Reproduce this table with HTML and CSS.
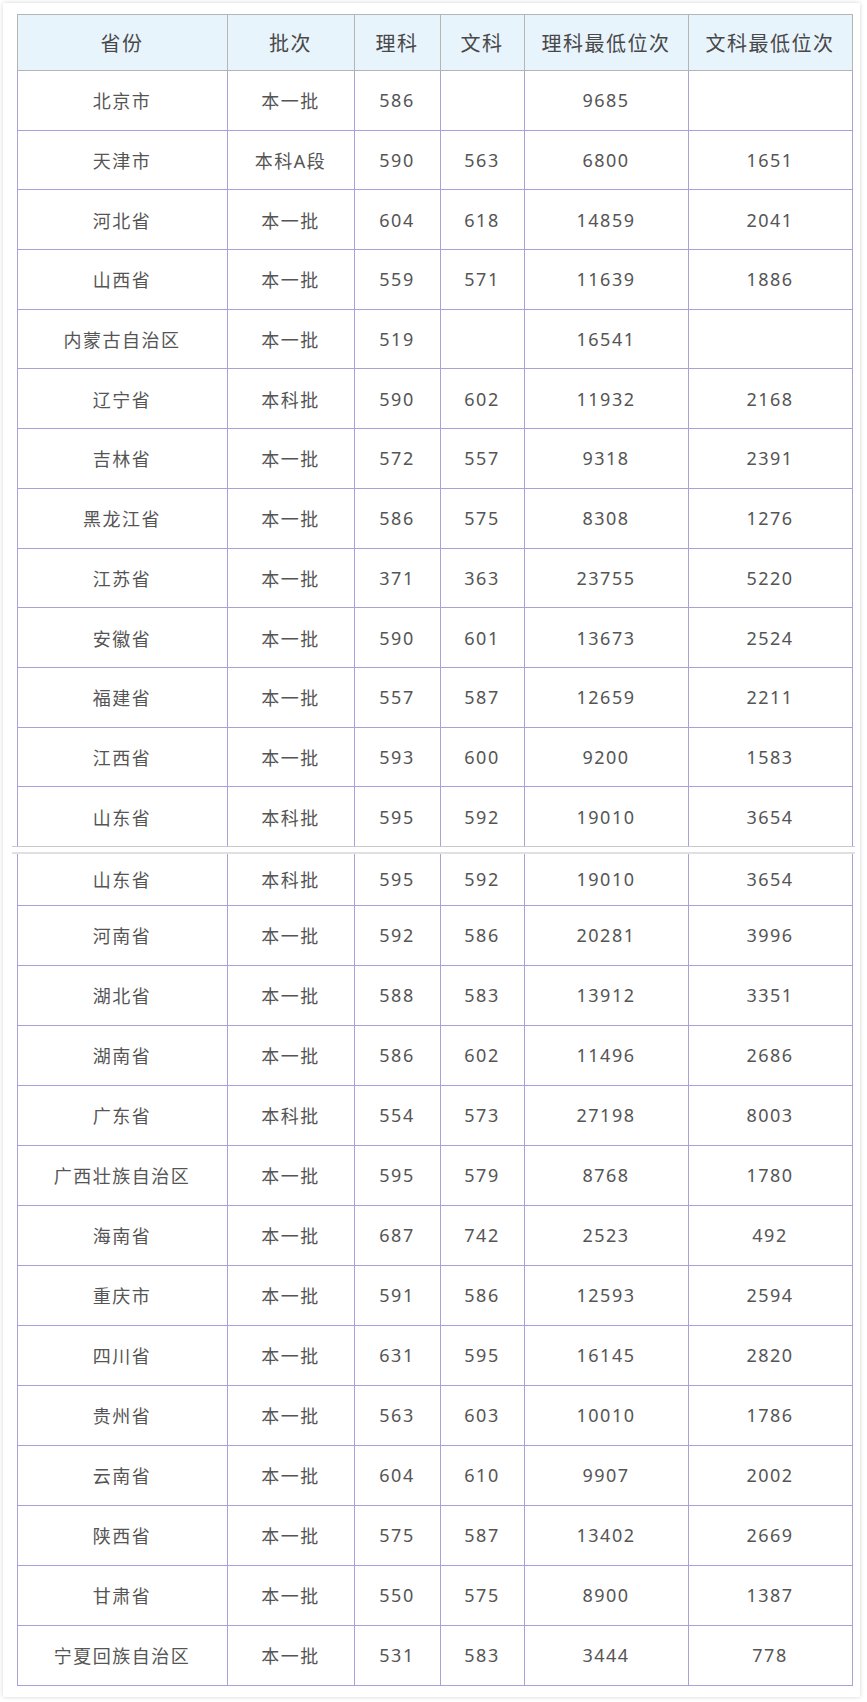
FILE: index.html
```html
<!DOCTYPE html>
<html lang="zh">
<head>
<meta charset="utf-8">
<title>分数线</title>
<link rel="stylesheet" href="styles.css">
</head>
<body>
<div class="card">
<table class="tbl top">
<colgroup><col class="c1"><col class="c2"><col class="c3"><col class="c4"><col class="c5"><col class="c6"></colgroup>
<thead>
<tr><th>省份</th><th>批次</th><th>理科</th><th>文科</th><th>理科最低位次</th><th>文科最低位次</th></tr>
</thead>
<tbody>
<tr><td>北京市</td><td>本一批</td><td>586</td><td></td><td>9685</td><td></td></tr>
<tr><td>天津市</td><td>本科A段</td><td>590</td><td>563</td><td>6800</td><td>1651</td></tr>
<tr><td>河北省</td><td>本一批</td><td>604</td><td>618</td><td>14859</td><td>2041</td></tr>
<tr><td>山西省</td><td>本一批</td><td>559</td><td>571</td><td>11639</td><td>1886</td></tr>
<tr><td>内蒙古自治区</td><td>本一批</td><td>519</td><td></td><td>16541</td><td></td></tr>
<tr><td>辽宁省</td><td>本科批</td><td>590</td><td>602</td><td>11932</td><td>2168</td></tr>
<tr><td>吉林省</td><td>本一批</td><td>572</td><td>557</td><td>9318</td><td>2391</td></tr>
<tr><td>黑龙江省</td><td>本一批</td><td>586</td><td>575</td><td>8308</td><td>1276</td></tr>
<tr><td>江苏省</td><td>本一批</td><td>371</td><td>363</td><td>23755</td><td>5220</td></tr>
<tr><td>安徽省</td><td>本一批</td><td>590</td><td>601</td><td>13673</td><td>2524</td></tr>
<tr><td>福建省</td><td>本一批</td><td>557</td><td>587</td><td>12659</td><td>2211</td></tr>
<tr><td>江西省</td><td>本一批</td><td>593</td><td>600</td><td>9200</td><td>1583</td></tr>
<tr class="last"><td>山东省</td><td>本科批</td><td>595</td><td>592</td><td>19010</td><td>3654</td></tr>
</tbody>
</table>
<div class="seam"></div>
<table class="tbl bottom">
<colgroup><col class="c1"><col class="c2"><col class="c3"><col class="c4"><col class="c5"><col class="c6"></colgroup>
<tbody>
<tr class="first"><td>山东省</td><td>本科批</td><td>595</td><td>592</td><td>19010</td><td>3654</td></tr>
<tr><td>河南省</td><td>本一批</td><td>592</td><td>586</td><td>20281</td><td>3996</td></tr>
<tr><td>湖北省</td><td>本一批</td><td>588</td><td>583</td><td>13912</td><td>3351</td></tr>
<tr><td>湖南省</td><td>本一批</td><td>586</td><td>602</td><td>11496</td><td>2686</td></tr>
<tr><td>广东省</td><td>本科批</td><td>554</td><td>573</td><td>27198</td><td>8003</td></tr>
<tr><td>广西壮族自治区</td><td>本一批</td><td>595</td><td>579</td><td>8768</td><td>1780</td></tr>
<tr><td>海南省</td><td>本一批</td><td>687</td><td>742</td><td>2523</td><td>492</td></tr>
<tr><td>重庆市</td><td>本一批</td><td>591</td><td>586</td><td>12593</td><td>2594</td></tr>
<tr><td>四川省</td><td>本一批</td><td>631</td><td>595</td><td>16145</td><td>2820</td></tr>
<tr><td>贵州省</td><td>本一批</td><td>563</td><td>603</td><td>10010</td><td>1786</td></tr>
<tr><td>云南省</td><td>本一批</td><td>604</td><td>610</td><td>9907</td><td>2002</td></tr>
<tr><td>陕西省</td><td>本一批</td><td>575</td><td>587</td><td>13402</td><td>2669</td></tr>
<tr><td>甘肃省</td><td>本一批</td><td>550</td><td>575</td><td>8900</td><td>1387</td></tr>
<tr><td>宁夏回族自治区</td><td>本一批</td><td>531</td><td>583</td><td>3444</td><td>778</td></tr>
</tbody>
</table>
</div>
</body>
</html>
```

FILE: styles.css
```css
html, body {
  margin: 0;
  padding: 0;
  background: #ffffff;
}
body {
  font-family: "Noto Sans", "Noto Sans CJK SC", sans-serif;
  color: #555555;
}
.card {
  margin: 3px;
  width: 857px;
  box-sizing: border-box;
  padding: 11px 0 11px 13.5px;
  background: #ffffff;
  box-shadow: 0 0 4px rgba(0, 0, 0, 0.18);
}
.tbl {
  border-collapse: collapse;
  table-layout: fixed;
  width: 835px;
}
.c1 { width: 210px; }
.c2 { width: 127px; }
.c3 { width: 86px; }
.c4 { width: 84px; }
.c5 { width: 164px; }
.c6 { width: 164px; }
.tbl th {
  height: 55px;
  padding: 0;
  background: #e8f4fc;
  border: 1px solid #b5b5b5;
  font-weight: normal;
  font-size: 20px;
  letter-spacing: 1.5px;
  color: #484848;
  text-align: center;
  vertical-align: middle;
}
.tbl td {
  height: 58.7px;
  padding: 0;
  border: 1px solid #aaa1d6;
  font-size: 18px;
  letter-spacing: 1.5px;
  text-align: center;
  vertical-align: middle;
}
.top tr.last td {
  border-bottom: none;
}
.bottom td {
  height: 59px;
}
.bottom tr.first td {
  border-top: none;
  height: 51px;
}
.seam {
  margin-left: -4.5px;
  width: 843px;
  height: 5px;
  border-top: 1px solid #c9c9c9;
  border-bottom: 2px solid #e0e0e0;
  box-sizing: content-box;
}
```
